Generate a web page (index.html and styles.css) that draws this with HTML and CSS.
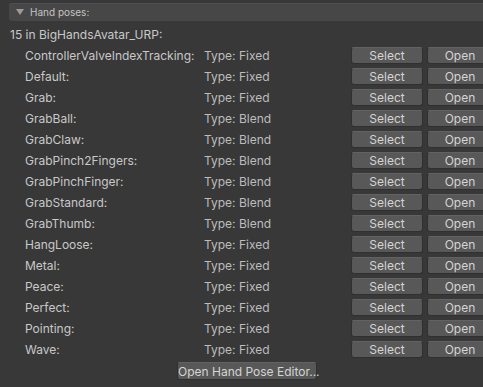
FILE: index.html
```html
<!DOCTYPE html>
<html lang="en">
<head>
    <meta charset="UTF-8">
    <title>Hand poses</title>
    <link rel="stylesheet" href="styles.css">
</head>
<body>

    <div class="foldout">
        <span class="arrow"></span>
        <span class="foldout-title">Hand poses:</span>
    </div>

    <div class="summary">15 in BigHandsAvatar_URP:</div>

    <div class="poses">
        <div class="pose"><span class="name">ControllerValveIndexTracking:</span><span class="type">Type: Fixed</span><button>Select</button><button class="open">Open</button></div>
        <div class="pose"><span class="name">Default:</span><span class="type">Type: Fixed</span><button>Select</button><button class="open">Open</button></div>
        <div class="pose"><span class="name">Grab:</span><span class="type">Type: Fixed</span><button>Select</button><button class="open">Open</button></div>
        <div class="pose"><span class="name">GrabBall:</span><span class="type">Type: Blend</span><button>Select</button><button class="open">Open</button></div>
        <div class="pose"><span class="name">GrabClaw:</span><span class="type">Type: Blend</span><button>Select</button><button class="open">Open</button></div>
        <div class="pose"><span class="name">GrabPinch2Fingers:</span><span class="type">Type: Blend</span><button>Select</button><button class="open">Open</button></div>
        <div class="pose"><span class="name">GrabPinchFinger:</span><span class="type">Type: Blend</span><button>Select</button><button class="open">Open</button></div>
        <div class="pose"><span class="name">GrabStandard:</span><span class="type">Type: Blend</span><button>Select</button><button class="open">Open</button></div>
        <div class="pose"><span class="name">GrabThumb:</span><span class="type">Type: Blend</span><button>Select</button><button class="open">Open</button></div>
        <div class="pose"><span class="name">HangLoose:</span><span class="type">Type: Fixed</span><button>Select</button><button class="open">Open</button></div>
        <div class="pose"><span class="name">Metal:</span><span class="type">Type: Fixed</span><button>Select</button><button class="open">Open</button></div>
        <div class="pose"><span class="name">Peace:</span><span class="type">Type: Fixed</span><button>Select</button><button class="open">Open</button></div>
        <div class="pose"><span class="name">Perfect:</span><span class="type">Type: Fixed</span><button>Select</button><button class="open">Open</button></div>
        <div class="pose"><span class="name">Pointing:</span><span class="type">Type: Fixed</span><button>Select</button><button class="open">Open</button></div>
        <div class="pose"><span class="name">Wave:</span><span class="type">Type: Fixed</span><button>Select</button><button class="open">Open</button></div>
    </div>

    <div class="footer">
        <button class="editor">Open Hand Pose Editor...</button>
    </div>

</body>
</html>
```

FILE: styles.css
```css
body {
    font-family: 'Inter', 'Liberation Sans', sans-serif;
    font-size: 12px;
    background-color: #383838;
    color: #c8c8c8;
    margin: 0;
    padding: 3px 0 0 0;
    width: 483px;
    height: 387px;
    overflow: hidden;
}

.foldout {
    display: flex;
    align-items: center;
    margin-left: 9px;
    width: 474px;
    height: 18px;
    background: #474747;
    border-radius: 3px 0 0 3px;
    box-shadow: inset 0 1px 0 #4f4f4f;
}

.arrow {
    width: 0;
    height: 0;
    margin: 0 6px 0 7px;
    border-left: 4px solid transparent;
    border-right: 4px solid transparent;
    border-top: 6px solid #9b9b9b;
}

.foldout-title {
    font-size: 10px;
    color: #c4c4c4;
}

.summary {
    height: 20px;
    line-height: 20px;
    margin-top: 4px;
    padding-left: 10px;
}

.poses {
    margin-top: 0;
}

.pose {
    display: grid;
    grid-template-columns: 179px 147px 76px 56px;
    align-items: center;
    height: 21px;
    padding-left: 25px;
}

.pose .name {
    white-space: nowrap;
}

.pose .type {
    color: #bdbdbd;
}

button {
    font-family: inherit;
    font-size: 12px;
    color: #d4d4d4;
    background: #585858;
    border: 1px solid #303030;
    border-top-color: #626262;
    border-radius: 3px;
    height: 17px;
    padding: 0;
    line-height: 15px;
    white-space: nowrap;
}

.pose button {
    width: 72px;
}

.pose .open {
    width: 66px;
}

.footer {
    margin-top: 2px;
    padding-left: 177px;
}

.footer .editor {
    width: 140px;
    height: 18px;
}
```
